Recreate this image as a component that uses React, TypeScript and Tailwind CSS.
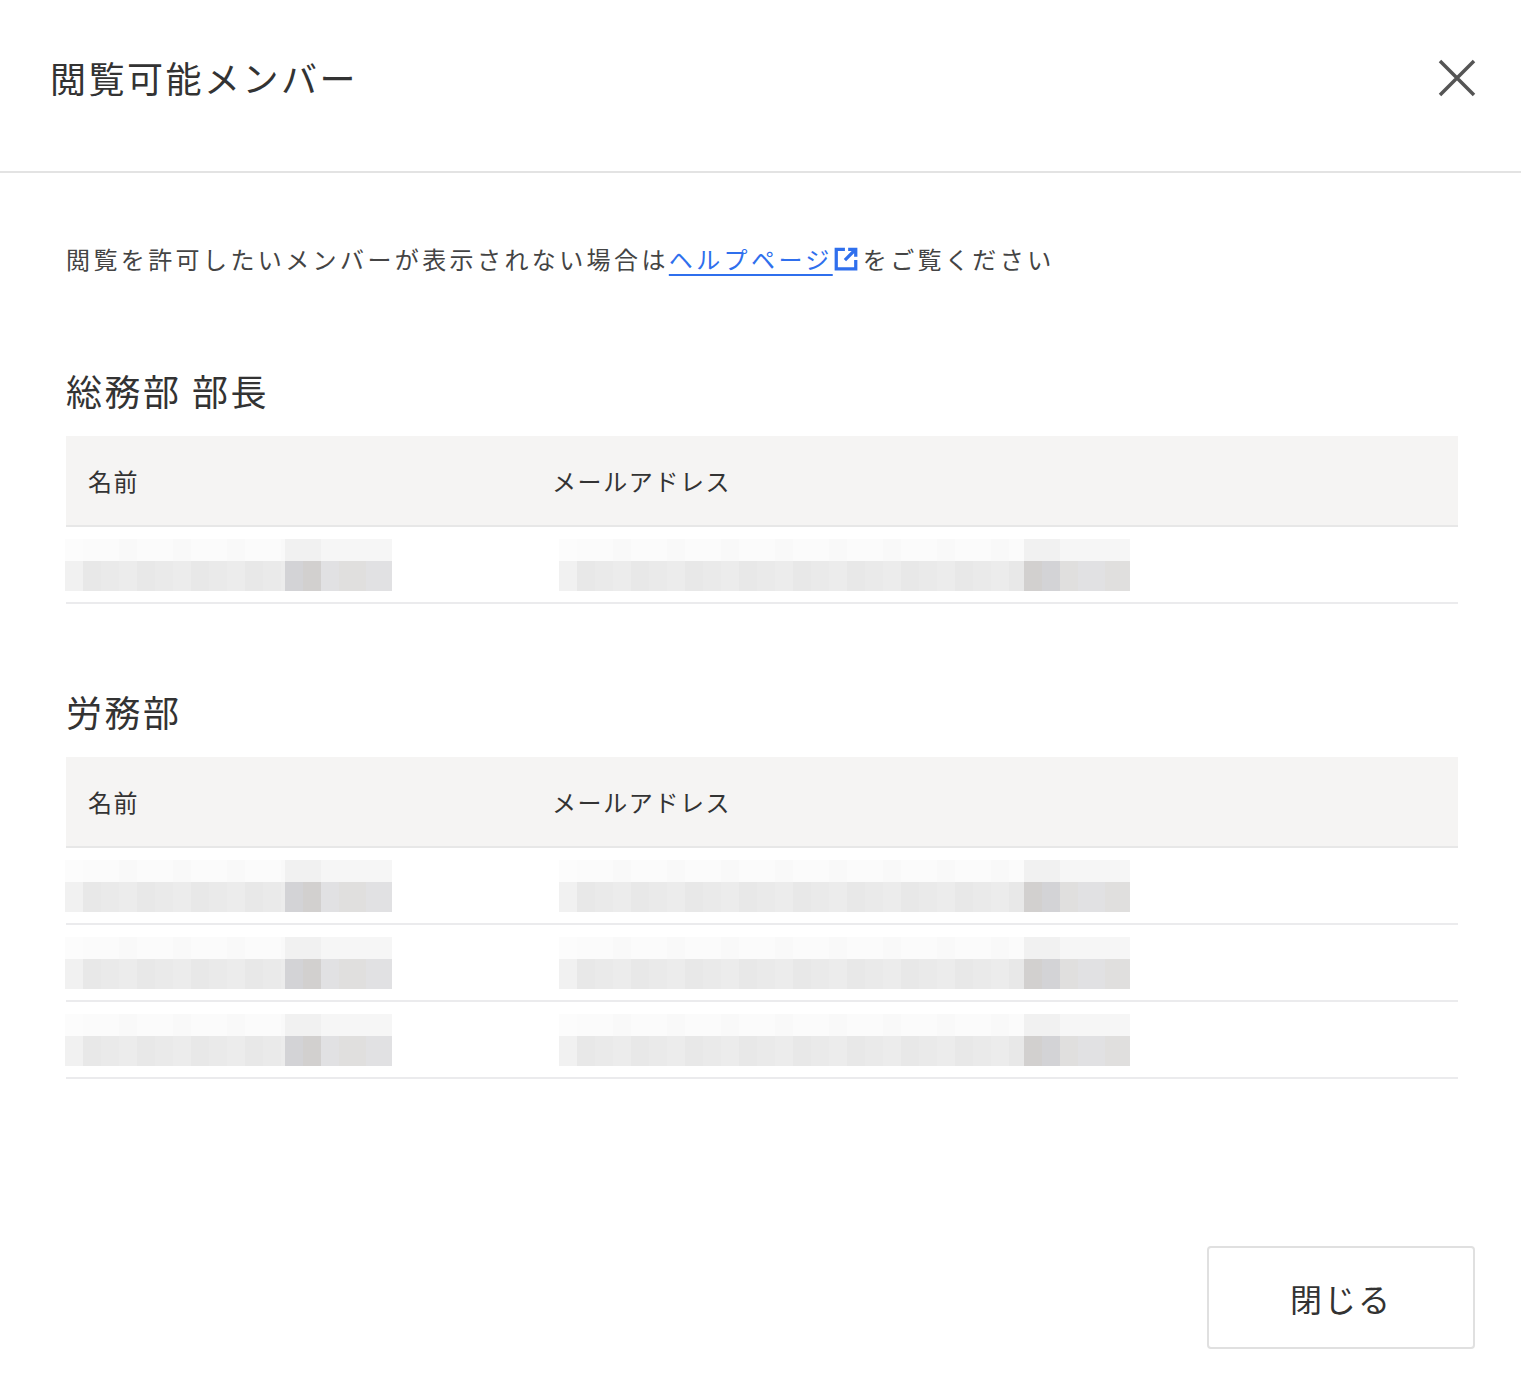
import React from "react";

function Cells({ w, dark, top }: { w: number; dark: number; top: boolean }) {
  const cells: [string, number][] = [];
  const step = 18;
  const bounds: number[] = [];
  for (let x = 0; x < dark; x += step) bounds.push(x);
  bounds.push(dark, dark + 18, dark + 36);
  for (let x = dark + 36 + step; x < w; x += step * 1.5) bounds.push(Math.round(x));
  bounds.push(w);
  for (let i = 0; i < bounds.length - 1; i++) {
    const x = bounds[i];
    const cw = bounds[i + 1] - x;
    if (cw <= 0) continue;
    let c: string;
    if (x >= dark && x < dark + 36) c = top ? "#f1f1f1" : i % 2 ? "#d3d3d6" : "#d2d0cf";
    else if (x >= dark) c = top ? "#f6f6f6" : i % 2 ? "#e1e1e3" : "#e0dfde";
    else c = top ? (i % 3 === 0 ? "#f9f9f9" : "#fbfbfb") : (i % 3 === 0 ? "#ececec" : i % 3 === 1 ? "#e8e8e8" : "#eaeaea");
    if (x === 0) c = top ? "#fcfcfc" : "#f1f1f1";
    cells.push([c, cw]);
  }
  return (
    <div className="flex" style={{ height: top ? 22 : 30 }}>
      {cells.map(([c, cw], k) => (
        <div key={k} style={{ background: c, width: cw }} />
      ))}
    </div>
  );
}

function Blur({ w, dark }: { w: number; dark: number }) {
  return (
    <div style={{ width: w }}>
      <Cells w={w} dark={dark} top />
      <Cells w={w} dark={dark} top={false} />
    </div>
  );
}

function Row() {
  return (
    <div className="flex h-[77px] items-center border-b-2 border-[#ebebed] pt-[1px]">
      <div className="w-[494px] shrink-0 -ml-[1px]">
        <Blur w={327} dark={220} />
      </div>
      <Blur w={571} dark={465} />
    </div>
  );
}

function Section({ title, rows }: { title: string; rows: number }) {
  return (
    <div>
      <h2 className="text-[36px] leading-none text-[#333] h-[68px] pt-[4px] tracking-[2.5px]">{title}</h2>
      <div className="flex h-[91px] items-center bg-[#f5f4f3] border-b-2 border-[#e7e7e7] text-[24px] text-[#333] tracking-[1.6px]">
        <div className="w-[486px] pl-[22px]">名前</div>
        <div>メールアドレス</div>
      </div>
      {Array.from({ length: rows }).map((_, i) => (
        <Row key={i} />
      ))}
    </div>
  );
}

export default function App() {
  return (
    <div className="w-[1521px] h-[1398px] bg-white" style={{ fontFamily: '"Noto Sans CJK JP", "Noto Sans", sans-serif' }}>
      <div className="h-[173px] border-b-2 border-[#e3e3e3] flex items-center justify-between pl-[50px] pr-[44px]">
        <h1 className="text-[36px] text-[#333] -mt-[18px] tracking-[2.5px]">閲覧可能メンバー</h1>
        <svg width="40" height="40" viewBox="0 0 40 40" className="-mt-[16px]" stroke="#555" strokeWidth="3.5">
          <path d="M3 3 L37 37 M37 3 L3 37" />
        </svg>
      </div>
      <div className="px-[66px] pr-[63px]">
        <p className="mt-[66px] text-[24px] text-[#444] flex items-center leading-none h-[40px] tracking-[3.4px]">
          閲覧を許可したいメンバーが表示されない場合は
          <span className="text-[#2f6fed] underline underline-offset-[5px]">ヘルプページ</span>
          <svg width="26" height="26" viewBox="0 0 24 24" fill="none" stroke="#2f6fed" strokeWidth="3" className="mr-[4px] shrink-0">
            <path d="M11 3H3v18h18v-8" />
            <path d="M14 3h7v7M21 3L11 13" />
          </svg>
          をご覧ください
        </p>
        <div className="mt-[89px]">
          <Section title="総務部 部長" rows={1} />
        </div>
        <div className="mt-[85px]">
          <Section title="労務部" rows={3} />
        </div>
        <div className="flex justify-end mt-[167px] -mr-[17px]">
          <button className="w-[268px] h-[103px] border-2 border-[#e0e0e0] rounded-[4px] text-[32px] text-[#333] tracking-[2px]">閉じる</button>
        </div>
      </div>
    </div>
  );
}
